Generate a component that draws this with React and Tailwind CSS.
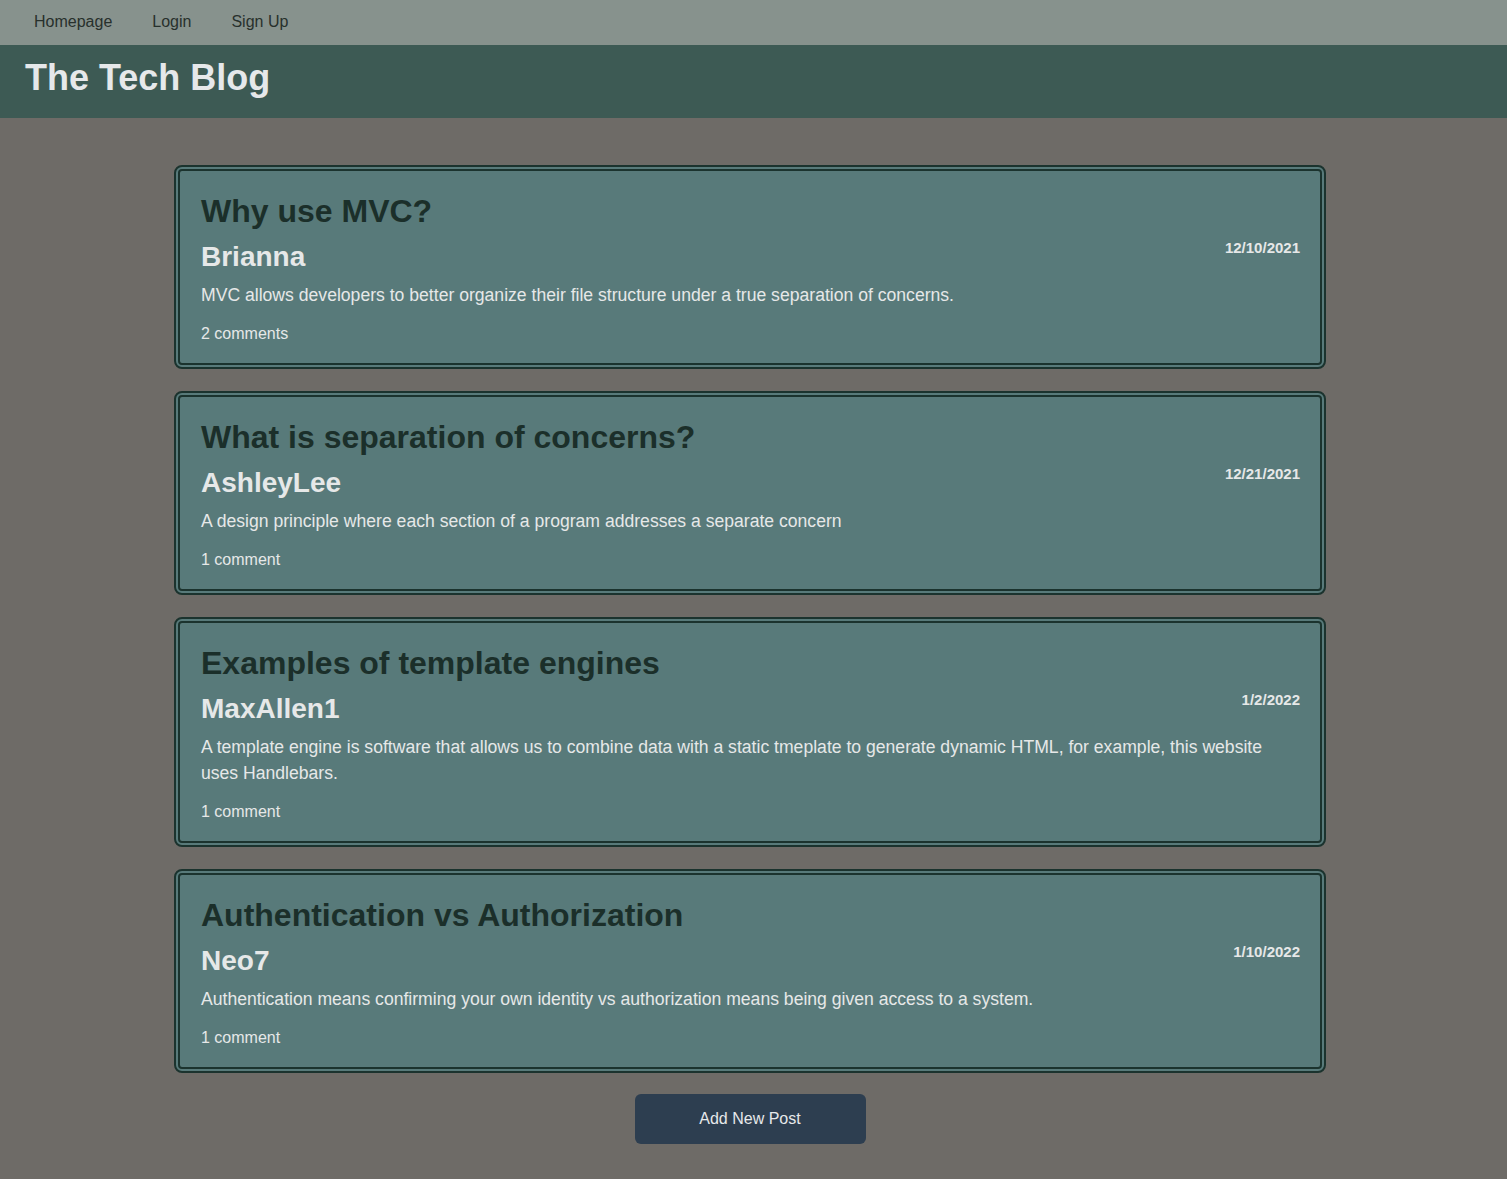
import React from "react";

const posts = [
  {
    title: "Why use MVC?",
    author: "Brianna",
    date: "12/10/2021",
    body: "MVC allows developers to better organize their file structure under a true separation of concerns.",
    comments: "2 comments",
  },
  {
    title: "What is separation of concerns?",
    author: "AshleyLee",
    date: "12/21/2021",
    body: "A design principle where each section of a program addresses a separate concern",
    comments: "1 comment",
  },
  {
    title: "Examples of template engines",
    author: "MaxAllen1",
    date: "1/2/2022",
    body: "A template engine is software that allows us to combine data with a static tmeplate to generate dynamic HTML, for example, this website uses Handlebars.",
    comments: "1 comment",
  },
  {
    title: "Authentication vs Authorization",
    author: "Neo7",
    date: "1/10/2022",
    body: "Authentication means confirming your own identity vs authorization means being given access to a system.",
    comments: "1 comment",
  },
];

function PostCard({ post }) {
  return (
    <article className="rounded-lg border-[6px] border-double border-[#1b332e] bg-[#587a7a] pl-[21px] pr-5 pt-[21px] pb-[17px]">
      <h2 className="text-[32px] leading-[38px] font-bold text-[#1b2f2a]">{post.title}</h2>
      <div className="mt-[11px] flex items-start justify-between">
        <h3 className="text-[28px] leading-[32px] font-bold text-[#e6e8e8]">{post.author}</h3>
        <span className="mt-[-2px] text-[15px] leading-[17px] font-bold text-[#e6e8e8]">{post.date}</span>
      </div>
      <p className="mt-[9px] text-[17.6px] leading-[26px] text-[#e6e8e8]">{post.body}</p>
      <p className="mt-[14px] text-[16px] leading-[24px] text-[#e6e8e8]">{post.comments}</p>
    </article>
  );
}

export default function App() {
  return (
    <div
      className="min-h-screen bg-[#6e6b67]"
      style={{ fontFamily: '"Liberation Sans", Arial, sans-serif' }}
    >
      <nav className="flex h-[45px] items-center bg-[#87928d] pb-[2px] pl-[14px] text-[16px] text-[#27302c]">
        <a className="px-5">Homepage</a>
        <a className="px-5">Login</a>
        <a className="px-5">Sign Up</a>
      </nav>
      <header className="h-[73px] bg-[#3d5a54] pl-[25px] pt-[13px]">
        <h1 className="text-[36px] leading-[40px] font-bold text-[#e6e8ea]">The Tech Blog</h1>
      </header>
      <main className="w-[1500px] pt-[47px] pb-[35px]">
        <div className="mx-auto flex w-[1152px] flex-col gap-[22px]">
          {posts.map((p) => (
            <PostCard key={p.title} post={p} />
          ))}
        </div>
        <div className="mt-[21px] flex justify-center">
          <button className="h-[50px] w-[231px] rounded-md bg-[#2d3e50] text-[16px] text-[#e6e8ea]">
            Add New Post
          </button>
        </div>
      </main>
    </div>
  );
}
